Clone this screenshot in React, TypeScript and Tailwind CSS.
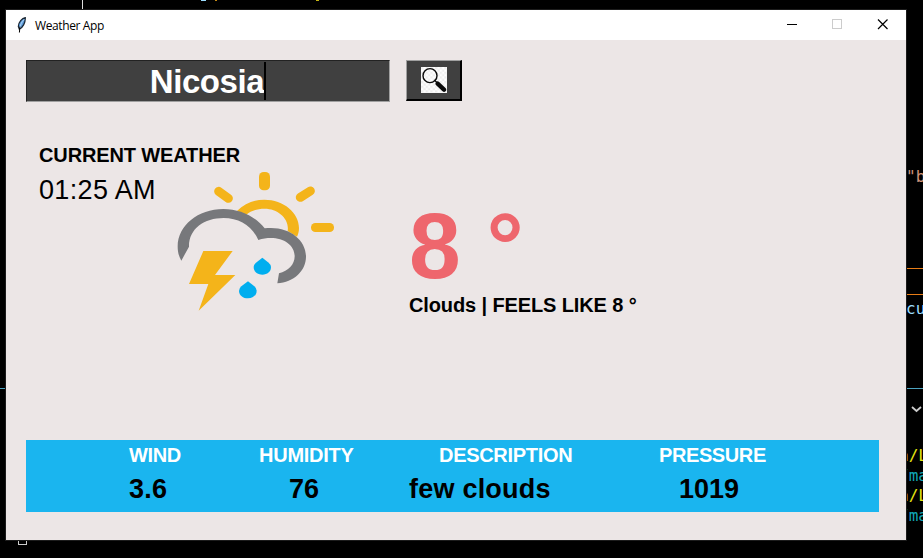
import React from "react";

const labels = [
  { text: "WIND", box: "w-[130px]", fit: "tracking-[-0.4px]" },
  { text: "HUMIDITY", box: "w-[180px]", fit: "tracking-[-0.25px]" },
  { text: "DESCRIPTION", box: "w-[220px]", fit: "tracking-[-0.3px]" },
  { text: "PRESSURE", box: "w-[150px]", fit: "tracking-[-0.4px]" },
];

const values = [
  { text: "3.6", box: "w-[160px]", fit: "tracking-[0.2px]" },
  { text: "76", box: "w-[120px]", fit: "tracking-[0px]" },
  { text: "few clouds", box: "w-[270px]", fit: "tracking-[0.22px]" },
  { text: "1019", box: "w-[150px]", fit: "tracking-[0px]" },
];

function Feather() {
  return (
    <svg className="h-4 w-3" viewBox="0 0 12 16">
      <path d="M9.300 .7C6 1.300 2.500 5 2.300 9.500L3.300 12.200C7 10.500 9.500 5.500 9.300 .7Z" fill="#5b9bdc" stroke="#1b2733" strokeWidth="1.200" />
      <path d="M8 2.500C5.600 5 4.400 8 3.800 11" fill="none" stroke="#b9dcf8" strokeWidth="1" />
      <path d="M3.900 9.500L3.400 15.500" fill="none" stroke="#000" strokeWidth="1" />
    </svg>
  );
}

function TitleBar() {
  return (
    <header className="flex h-[30px] items-center bg-white pl-[10px] font-['Open_Sans','Noto_Sans',sans-serif] text-[12px] text-black">
      <Feather />
      <span className="mt-px ml-[7px] tracking-[-0.38px]">Weather App</span>
      <svg className="ml-auto h-[30px] w-[138px]" viewBox="0 0 138 30" shapeRendering="crispEdges">
        <path d="M19 14.500h10" stroke="#000" />
        <rect x="64.500" y="9.500" width="9" height="9" fill="none" stroke="#ccc" />
        <path d="M110 9.500l9.500 9.500M119.500 9.500l-9.500 9.500" stroke="#000" strokeWidth="1.200" shapeRendering="auto" />
      </svg>
    </header>
  );
}

function SearchIcon() {
  return (
    <svg className="h-[26px] w-[26px]" viewBox="0 0 78 78">
      <defs>
        <pattern id="checker" width="14" height="14" patternUnits="userSpaceOnUse">
          <rect width="14" height="14" fill="#fff" />
          <path d="M0 0h7v7H0zM7 7h7v7H7z" fill="#eee" />
        </pattern>
      </defs>
      <rect width="78" height="78" fill="url(#checker)" />
      <circle cx="27" cy="26" r="21" fill="none" stroke="#0a0a0a" strokeWidth="4.200" />
      <path d="M40 39l9 9" stroke="#0a0a0a" strokeWidth="4" />
      <path d="M50 50l19 18" stroke="#0a0a0a" strokeWidth="13" strokeLinecap="round" />
    </svg>
  );
}

function StormIcon() {
  return (
    <svg className="-mt-1 h-[141px] w-[158px] shrink-0" viewBox="51 33 474 423">
      <g fill="#f4b41a">
        <rect x="297" y="36" width="33" height="55" rx="14" />
        <rect x="453" y="189" width="69" height="27" rx="13" />
        <path d="M231 153C254 130 282 119 313 119C371 119 417 158 417 204C417 214 415 222 411 230L383 213C389 176 354 146 314 146C290 146 272 153 258 165Z" />
        <path d="M130 273H218L165 345H226L116 452L145 372H87Z" />
      </g>
      <path d="M176 94L205 115M421 112L451 93" stroke="#f4b41a" strokeWidth="27" strokeLinecap="round" />
      <path d="M64 302C56 288 53 276 53 259C53 197 114 147 190 147C241 147 287 170 314 205C383 196 438 237 438 290C438 332 401 367 352 370L357 340C385 333 404 314 404 289C404 247 352 222 295 240C276 198 238 174 191 174C132 174 86 207 87 260Z" fill="#77787b" />
      <g fill="#00aeef">
        <path d="M307 293L326 308Q333 314 333 321C333 335 322 344 307 344C292 344 281 335 281 321Q281 314 288 308Z" />
        <path d="M264 364L283 379Q290 385 290 392C290 406 279 415 264 415C249 415 237 406 237 392Q237 385 244 379Z" />
      </g>
    </svg>
  );
}

function Terminal() {
  return (
    <div className="absolute inset-0 font-['DejaVu_Sans_Mono',monospace] text-[16px] leading-5 whitespace-pre">
      <i className="absolute top-0 left-[82px] h-[10px] w-px bg-[#ddd]" />
      <i className="absolute top-0 left-[201px] h-px w-[5px] bg-[#9cdcfe]" />
      <i className="absolute top-0 left-[215px] h-px w-[2px] bg-[#c58a16]" />
      <i className="absolute top-0 left-[316px] h-px w-[3px] bg-[#c5b616]" />
      <i className="absolute top-[388px] left-0 h-px w-full bg-[#4ba3c0]" />
      <i className="absolute top-[268px] left-[906px] h-px w-[17px] bg-[#e87d16]" />
      <i className="absolute top-[294px] left-[906px] h-px w-[17px] bg-[#e87d16]" />
      <span className="absolute top-[167px] left-[906px] text-[#ce9178]">"b</span>
      <span className="absolute top-[299px] left-[906px] text-[#9cdcfe]">cu</span>
      <svg className="absolute top-[406px] left-[911px] h-[7px] w-[11px]" viewBox="0 0 11 7"><path d="M1 1l4.500 4L10 1" fill="none" stroke="#ccc" strokeWidth="1.800" /></svg>
      <span className="absolute top-[446px] left-[899px] text-[#e5e510]">a/L</span>
      <span className="absolute top-[466px] left-[899px] text-[#11a8b8]">/ma</span>
      <span className="absolute top-[486px] left-[899px] text-[#e5e510]">a/L</span>
      <span className="absolute top-[506px] left-[899px] text-[#11a8b8]">/ma</span>
      <i className="absolute top-[530px] left-[18px] h-[15px] w-[9px] border border-[#ccc]" />
    </div>
  );
}

export default function App() {
  return (
    <div className="relative h-[558px] w-[923px] overflow-hidden bg-black">
      <Terminal />
      <div className="absolute top-[9px] left-[5px] flex h-[532px] w-[902px] flex-col border border-[#1c1c1c] bg-[#ece6e6]">
        <TitleBar />
        <main className="flex flex-1 flex-col px-5 pt-5 font-['Liberation_Sans',Arial,sans-serif] text-black">
          <div className="flex h-[42px]">
            <div className="flex h-[42px] w-[364px] items-center justify-center border border-t-[#222] border-r-[#a0a0a0] border-b-[#a0a0a0] border-l-[#222] bg-[#404040] text-[33px] leading-10 font-bold text-white">
              <span className="pt-[2px] tracking-[-0.4px]">Nicosia</span>
              <i className="h-[38px] w-[2px] bg-black" />
            </div>
            <button className="ml-4 flex h-[41px] w-[56px] items-center justify-center border-t border-r-2 border-b-2 border-l border-t-[#a0a0a0] border-r-black border-b-black border-l-[#a0a0a0] bg-[#404040]">
              <SearchIcon />
            </button>
          </div>
          <section className="flex h-[338px] pt-[43px]">
            <div className="w-[383px] pl-[13px]">
              <h1 className="text-[20px] leading-5 font-bold tracking-[-0.13px]">CURRENT WEATHER</h1>
              <div className="flex pt-[10px]">
                <p className="w-[138px] shrink-0 text-[27px] leading-[30px] tracking-[0.35px]">01:25 AM</p>
                <StormIcon />
              </div>
            </div>
            <div className="pt-[52px] font-bold">
              <p className="text-[93px] leading-[98px] text-[#ee666d]">8 °</p>
              <p className="text-[20px] leading-5 tracking-[-0.12px]">Clouds | FEELS LIKE 8 °</p>
            </div>
          </section>
          <section className="h-[72px] w-[853px] bg-[#1ab5ef] pt-[5px] pl-[103px] font-bold whitespace-nowrap">
            <div className="flex text-[20px] leading-5 text-white">
              {labels.map((l) => (
                <div key={l.text} className={l.box}><span className={l.fit}>{l.text}</span></div>
              ))}
            </div>
            <div className="flex pt-[9px] text-[27px] leading-[30px]">
              {values.map((v) => (
                <div key={v.text} className={v.box}><span className={v.fit}>{v.text}</span></div>
              ))}
            </div>
          </section>
        </main>
      </div>
    </div>
  );
}
